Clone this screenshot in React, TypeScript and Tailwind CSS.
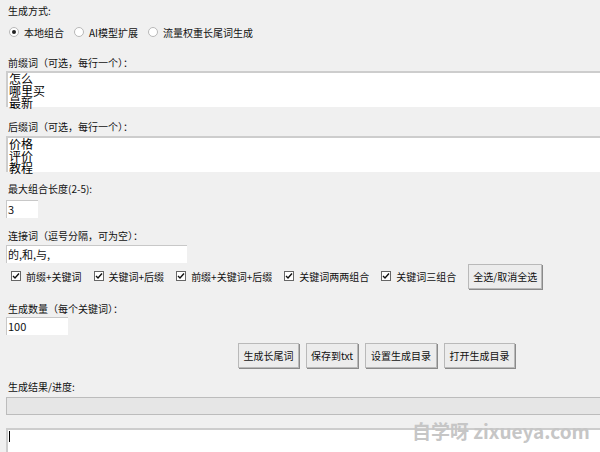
import React from "react";

function Radio({ checked, label }: { checked?: boolean; label: string }) {
  return (
    <div className="flex items-center h-[16px]">
      <span className="w-[10px] h-[10px] rounded-full border border-[#b8b8b8] bg-white flex items-center justify-center">
        {checked && <span className="w-[4px] h-[4px] rounded-full bg-[#222]" />}
      </span>
      <span className="ml-[5px]">{label}</span>
    </div>
  );
}

function Check({ label }: { label: string }) {
  return (
    <div className="flex items-center">
      <span className="w-[10px] h-[10px] border border-[#666] bg-white flex items-center justify-center">
        <svg width="8" height="8" viewBox="0 0 8 8">
          <path d="M1 4 L3 6 L7 1.5" stroke="#111" strokeWidth="1.4" fill="none" />
        </svg>
      </span>
      <span className="ml-[5px]">{label}</span>
    </div>
  );
}

function Btn({ children, className = "" }: { children: React.ReactNode; className?: string }) {
  return (
    <div
      className={
        "h-[25px] flex items-center justify-center bg-[#ececec] border border-[#b9b9b9] shadow-[1px_1px_0_#8a8a8a] text-[10px] text-[#111] " +
        className
      }
    >
      {children}
    </div>
  );
}

function Label({ children, className = "" }: { children: React.ReactNode; className?: string }) {
  return <div className={"h-[16px] leading-[16px] pl-[2px] " + className}>{children}</div>;
}

export default function App() {
  return (
    <div className="w-[600px] h-[452px] overflow-hidden bg-[#f0f0f0] text-[10px] text-[#111] font-['Noto_Sans_CJK_SC','Noto_Sans',sans-serif] relative">
      <div className="pl-[6px] pt-[3px] flex flex-col">
        <Label>生成方式:</Label>
        <div className="mt-[5px] flex items-center pl-[3px] gap-[10px]">
          <Radio checked label="本地组合" />
          <Radio label="AI模型扩展" />
          <Radio label="流量权重长尾词生成" />
        </div>

        <Label className="mt-[15px]">前缀词（可选，每行一个）：</Label>
        <div className="w-[620px] h-[36px] bg-white border-t-2 border-l-2 border-[#cdcdcd] text-[12px] leading-[12px] pl-[1px] pt-0 whitespace-pre text-[#000]">
          {"怎么\n哪里买\n最新"}
        </div>

        <Label className="mt-[12px]">后缀词（可选，每行一个）：</Label>
        <div className="mt-[1px] w-[620px] h-[36px] bg-white border-t-2 border-l-2 border-[#cdcdcd] text-[12px] leading-[12px] pl-[1px] whitespace-pre text-[#000]">
          {"价格\n评价\n教程"}
        </div>

        <Label className="mt-[9px]">最大组合长度(2-5):</Label>
        <div className="mt-[3px] w-[32px] h-[18px] bg-white border-t border-l border-[#c8c8c8] text-[11px] leading-[16px] pl-[1px]">
          3
        </div>

        <Label className="mt-[10px]">连接词（逗号分隔，可为空）：</Label>
        <div className="mt-[1px] w-[181px] h-[18px] bg-white border-t border-l border-[#c8c8c8] text-[11px] leading-[16px] pl-[1px]">
          的,和,与,
        </div>

        <div className="mt-[1px] h-[24px] flex items-center pl-[5px]">
          <div className="flex items-center gap-[12px]">
            <Check label="前缀+关键词" />
            <Check label="关键词+后缀" />
            <Check label="前缀+关键词+后缀" />
            <Check label="关键词两两组合" />
            <Check label="关键词三组合" />
          </div>
          <Btn className="ml-[12px] w-[74px] h-[24px]">全选/取消全选</Btn>
        </div>

        <Label className="mt-[13px]">生成数量（每个关键词）：</Label>
        <div className="w-[62px] h-[18px] bg-white border-t border-l border-[#c8c8c8] text-[11px] leading-[16px] pl-[1px]">
          100
        </div>

        <div className="mt-[8px] flex pl-[232px] gap-[7px]">
          <Btn className="w-[61px]">生成长尾词</Btn>
          <Btn className="w-[52px]">保存到txt</Btn>
          <Btn className="w-[72px]">设置生成目录</Btn>
          <Btn className="w-[71px]">打开生成目录</Btn>
        </div>

        <Label className="mt-[11px]">生成结果/进度:</Label>
        <div className="mt-[2px] w-[620px] h-[18px] bg-[#e6e6e6] border border-[#bcbcbc]" />

        <div className="mt-[13px] w-[620px] h-[40px] bg-white border-t-2 border-l-2 border-[#cdcdcd] pl-[1px] pt-[1px]">
          <div className="w-[1px] h-[11px] bg-[#000]" />
        </div>
      </div>
      <div className="absolute left-[412px] top-[419px] text-[19px] leading-[24px] font-bold text-[#c6c6c6] font-['Noto_Sans_CJK_SC','Noto_Sans',sans-serif] whitespace-nowrap">
        自学呀 zixueya.com
      </div>
    </div>
  );
}
